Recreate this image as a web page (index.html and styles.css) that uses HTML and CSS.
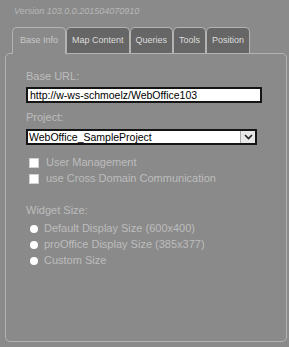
FILE: index.html
```html
<!DOCTYPE html>
<html lang="en">
<head>
    <meta charset="UTF-8">
    <title>WebOffice Settings</title>
    <link rel="stylesheet" href="styles.css">
</head>
<body>
<div class="phien-ban">Version 103.0.0.201504070910</div>

<!-- Tabs -->
<div class="the-hang">
    <div class="the dang-chon">Base Info</div>
    <div class="the">Map Content</div>
    <div class="the">Queries</div>
    <div class="the">Tools</div>
    <div class="the">Position</div>
</div>

<!-- Panel -->
<div class="khung">
    <label class="nhan">Base URL:</label>
    <input class="o-nhap" type="text" value="http://w-ws-schmoelz/WebOffice103">

    <label class="nhan">Project:</label>
    <div class="hop-chon">
        <select>
            <option>WebOffice_SampleProject</option>
        </select>
        <span class="mui-ten">
            <svg width="9" height="6" viewBox="0 0 9 6"><path d="M1 1 L4.5 4.5 L8 1" fill="none" stroke="#222" stroke-width="1.6"/></svg>
        </span>
    </div>

    <div class="dong-chon"><span class="o-vuong"></span>User Management</div>
    <div class="dong-chon"><span class="o-vuong"></span>use Cross Domain Communication</div>

    <label class="nhan nhan-kich-thuoc">Widget Size:</label>
    <div class="dong-tron"><span class="o-tron"></span>Default Display Size (600x400)</div>
    <div class="dong-tron"><span class="o-tron"></span>proOffice Display Size (385x377)</div>
    <div class="dong-tron"><span class="o-tron"></span>Custom Size</div>
</div>
</body>
</html>
```

FILE: styles.css
```css
body {
    font-family: "Liberation Sans", Arial, sans-serif;
    background-color: #8a8a8a;
    margin: 0;
    width: 289px;
    height: 347px;
    overflow: hidden;
}

.phien-ban {
    font-size: 9px;
    font-style: italic;
    color: #b8b8b8;
    line-height: 11px;
    padding: 6px 0 0 14px;
    height: 21px;
}

.the-hang {
    display: flex;
    margin-left: 12px;
    height: 26px;
    position: relative;
    z-index: 1;
}

.the {
    background-color: #666;
    color: #ddd;
    font-size: 9px;
    line-height: 25px;
    padding: 0 5px;
    border: 1px solid #b3b3b3;
    border-bottom: none;
    border-radius: 5px 5px 0 0;
}

.dang-chon {
    background-color: #8a8a8a;
    color: #c8c8c8;
    height: 26px;
    padding: 0 7px;
}

.khung {
    box-sizing: border-box;
    margin: 0 2px 0 5px;
    height: 289px;
    border: 1px solid #b3b3b3;
    border-radius: 5px;
    padding: 11px 0 0 20px;
    color: #bdbdbd;
    font-size: 11px;
}

.nhan {
    display: block;
    line-height: 13px;
    margin-top: 5px;
}

.o-nhap {
    display: block;
    box-sizing: border-box;
    width: 236px;
    height: 16px;
    margin: 4px 0 0 0;
    padding: 0 2px;
    border: 2px solid #151515;
    background: white;
    font-family: "Liberation Sans", Arial, sans-serif;
    font-size: 10.5px;
    color: #000;
}

.o-nhap + .nhan {
    margin-top: 8px;
}

.hop-chon {
    display: flex;
    box-sizing: border-box;
    width: 231px;
    height: 16px;
    margin-top: 5px;
    border: 2px solid #151515;
    background: white;
}

.hop-chon select {
    flex: 1;
    appearance: none;
    border: none;
    background: white;
    padding: 0 1px;
    font-family: "Liberation Sans", Arial, sans-serif;
    font-size: 10.5px;
    color: #000;
    outline: none;
}

.mui-ten {
    width: 14px;
    background: #e8e8e8;
    border-left: 1px solid #aaa;
    display: flex;
    align-items: center;
    justify-content: center;
}

.dong-chon {
    display: flex;
    align-items: center;
    line-height: 13px;
    margin-left: 3px;
    margin-top: 3px;
}

.hop-chon + .dong-chon {
    margin-top: 11px;
}

.o-vuong {
    width: 8px;
    height: 8px;
    background: white;
    border: 1px solid #d0d0d0;
    margin-right: 7px;
}

.nhan-kich-thuoc {
    margin-top: 19px;
}

.dong-tron {
    display: flex;
    align-items: center;
    line-height: 13px;
    margin-left: 4px;
    margin-top: 3px;
}

.nhan-kich-thuoc + .dong-tron {
    margin-top: 5px;
}

.o-tron {
    width: 8px;
    height: 8px;
    border-radius: 50%;
    background: white;
    margin-right: 6px;
}
```
